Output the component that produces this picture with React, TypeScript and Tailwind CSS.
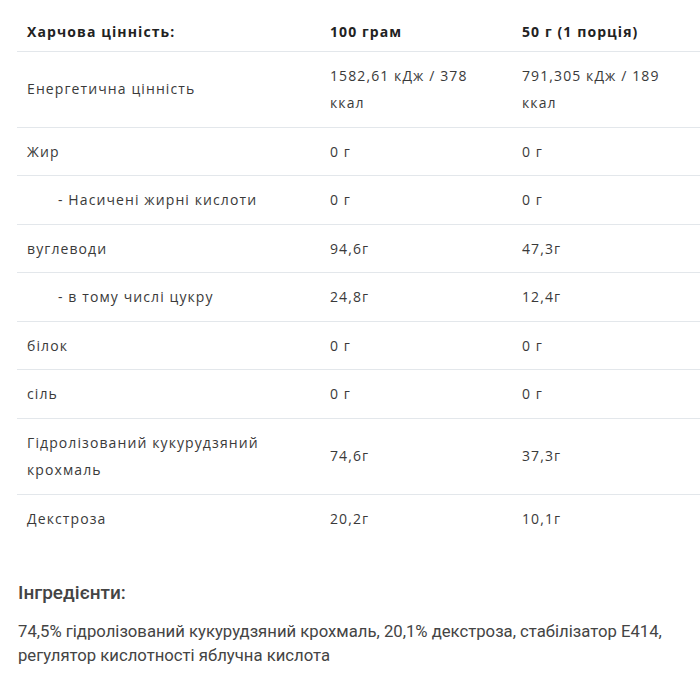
const rows: { name: string; a: string; b: string; indent?: boolean }[] = [
  { name: 'Енергетична цінність', a: '1582,61 кДж / 378 ккал', b: '791,305 кДж / 189 ккал' },
  { name: 'Жир', a: '0 г', b: '0 г' },
  { name: '- Насичені жирні кислоти', a: '0 г', b: '0 г', indent: true },
  { name: 'вуглеводи', a: '94,6г', b: '47,3г' },
  { name: '- в тому числі цукру', a: '24,8г', b: '12,4г', indent: true },
  { name: 'білок', a: '0 г', b: '0 г' },
  { name: 'сіль', a: '0 г', b: '0 г' },
  { name: 'Гідролізований кукурудзяний крохмаль', a: '74,6г', b: '37,3г' },
  { name: 'Декстроза', a: '20,2г', b: '10,1г' },
];

export default function App() {
  return (
    <div className="w-[700px] h-[700px] bg-white text-[#3a3a3a]">
      <table className="ml-[17px] w-[683px] border-collapse table-fixed font-['Open_Sans',sans-serif] text-[14px] leading-[27.5px] tracking-[1.1px]">
        <colgroup>
          <col className="w-[303px]" />
          <col className="w-[192px]" />
          <col />
        </colgroup>
        <thead>
          <tr className="border-b border-[#e3e7eb] text-left font-bold text-[#222]">
            <th className="px-[10px] pt-[18px] pb-[5px]">Харчова цінність:</th>
            <th className="px-[10px] pt-[18px] pb-[5px]">100 грам</th>
            <th className="px-[10px] pt-[18px] pb-[5px]">50 г (1 порція)</th>
          </tr>
        </thead>
        <tbody>
          {rows.map((r, i) => (
            <tr key={r.name} className={i < rows.length - 1 ? 'border-b border-[#e3e7eb]' : ''}>
              <td className={`py-[10px] pr-[10px] align-middle ${r.indent ? 'pl-[41px]' : 'pl-[10px]'}`}>{r.name}</td>
              <td className="py-[10px] px-[10px] align-middle">{r.a}</td>
              <td className="py-[10px] px-[10px] align-middle">{r.b}</td>
            </tr>
          ))}
        </tbody>
      </table>

      <div className="pl-[18px] mt-[39px] font-['Roboto',sans-serif] text-[#444]">
        <h3 className="text-[19px] font-medium leading-[24px]">Інгредієнти:</h3>
        <p className="mt-[15px] text-[16.7px] leading-[24px]">
          74,5% гідролізований кукурудзяний крохмаль, 20,1% декстроза, стабілізатор Е414,
          <br />
          регулятор кислотності яблучна кислота
        </p>
      </div>
    </div>
  );
}
